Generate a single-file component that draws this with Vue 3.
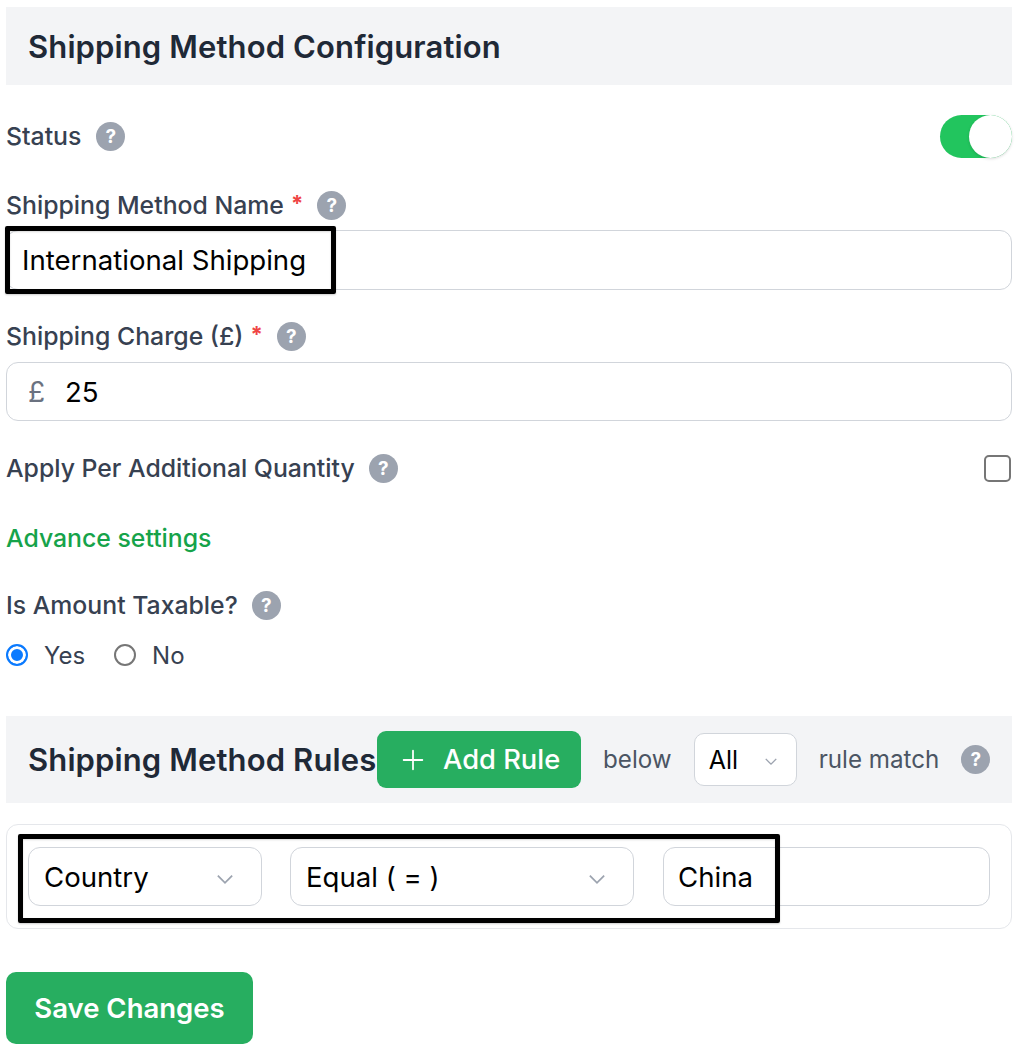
<script setup>
// Static form mock: no reactive state is needed.
</script>

<template>
  <div class="page">
    <div class="annot annot-name"></div>
    <div class="annot annot-rule"></div>

    <div class="section-head"><h2 class="title">Shipping Method Configuration</h2></div>

    <div class="row status-row">
      <span class="label">Status</span><span class="help status-help">?</span>
      <span class="toggle"><span class="knob"></span></span>
    </div>

    <div class="row name-label">
      <span class="label">Shipping Method Name</span><span class="req">*</span><span class="help">?</span>
    </div>
    <div class="field name-field">International Shipping</div>

    <div class="row charge-label">
      <span class="label">Shipping Charge (£)</span><span class="req">*</span><span class="help">?</span>
    </div>
    <div class="field charge-field"><span class="prefix">£</span>25</div>

    <div class="row apply-row">
      <span class="label">Apply Per Additional Quantity</span><span class="help">?</span>
      <span class="checkbox"></span>
    </div>

    <div class="row advance-row"><span class="advance">Advance settings</span></div>

    <div class="row taxable-row">
      <span class="label">Is Amount Taxable?</span><span class="help">?</span>
    </div>

    <div class="row radio-row">
      <span class="radio checked"></span><span class="radio-text yes">Yes</span>
      <span class="radio"></span><span class="radio-text">No</span>
    </div>

    <div class="rules-head">
      <h2 class="title rules-title">Shipping Method Rules</h2>
      <button class="add-btn">
        <svg class="plus" viewBox="0 0 20 20" fill="none" stroke="#fff" stroke-width="1.6" stroke-linecap="round"><path d="M10 1.5v17M1.5 10h17" /></svg>
        Add Rule
      </button>
      <span class="muted below">below</span>
      <div class="mini-select">All
        <svg class="chev small" viewBox="0 0 16 10" fill="none" stroke="#9ca3af" stroke-width="1.6"><path d="M2 2l6 6 6-6" /></svg>
      </div>
      <span class="muted match">rule match</span>
      <span class="help">?</span>
    </div>

    <div class="rule-box">
      <div class="field rule-select">Country
        <svg class="chev" viewBox="0 0 16 10" fill="none" stroke="#9ca3af" stroke-width="1.6"><path d="M1.5 1.500L8 8l6.500-6.500" /></svg>
      </div>
      <div class="field rule-select">Equal ( = )
        <svg class="chev" viewBox="0 0 16 10" fill="none" stroke="#9ca3af" stroke-width="1.6"><path d="M1.5 1.500L8 8l6.500-6.500" /></svg>
      </div>
      <div class="field rule-value">China</div>
    </div>

    <button class="save-btn">Save Changes</button>
  </div>
</template>

<style>
body { background: #fff; }
</style>

<style scoped>
* { box-sizing: border-box; }
.page {
  position: relative;
  width: 1018px;
  height: 1048px;
  padding: 7px 6px 0;
  font-family: Inter, "Liberation Sans", sans-serif;
  overflow: hidden;
  background: #fff;
}
.annot {
  position: absolute;
  border: 5px solid #000;
  border-radius: 2px;
  z-index: 2;
  pointer-events: none;
  box-shadow: 0 1px 2px rgba(0, 0, 0, 0.2), inset 0 1px 2px rgba(0, 0, 0, 0.15);
}
.annot-name { left: 5px; top: 226px; width: 331px; height: 68px; }
.annot-rule { left: 18px; top: 834px; width: 762px; height: 89px; }
.section-head {
  height: 78px;
  background: #f3f4f6;
  display: flex;
  align-items: center;
  padding-left: 22px;
}
.title {
  margin: 0;
  font-size: 31px;
  font-weight: 600;
  color: #1f2937;
  white-space: nowrap;
  letter-spacing: 0.12px;
}
.rules-title { width: 349px; flex: none; }
.row { display: flex; align-items: center; height: 30px; }
.label { font-size: 24.8px; font-weight: 500; color: #374151; white-space: nowrap; }
.req { color: #ef4444; font-size: 22px; font-weight: 700; margin-left: 7px; align-self: flex-start; }
.help {
  width: 29px;
  height: 29px;
  margin-left: 14px;
  border-radius: 50%;
  background: #9ca3af;
  color: #fff;
  font-size: 19px;
  font-weight: 700;
  display: inline-flex;
  align-items: center;
  justify-content: center;
  flex: none;
}
.status-help { margin-left: 15px; }
.status-row { margin-top: 29px; height: 44px; }
.toggle {
  margin-left: auto;
  width: 72px;
  height: 43px;
  border-radius: 22px;
  background: #22c55e;
  position: relative;
  flex: none;
}
.knob {
  position: absolute;
  right: 0;
  top: 0;
  width: 43px;
  height: 43px;
  border-radius: 50%;
  background: #fff;
  box-shadow: 0 1px 3px rgba(0, 0, 0, 0.15);
}
.name-label { margin-top: 32px; }
.field {
  border: 1px solid #d1d5db;
  border-radius: 12px;
  background: #fff;
  display: flex;
  align-items: center;
  font-size: 27.6px;
  color: #000;
  padding-left: 15px;
  white-space: nowrap;
}
.name-field { margin-top: 10px; height: 60px; }
.charge-label { margin-top: 31px; }
.charge-field { margin-top: 11px; height: 59px; padding-left: 21px; }
.prefix { color: #6b7280; width: 37px; font-size: 28px; }
.apply-row { margin-top: 32px; }
.checkbox {
  margin-left: auto;
  margin-right: 1px;
  width: 27px;
  height: 27px;
  border: 2px solid #767676;
  border-radius: 5px;
  flex: none;
}
.advance-row { margin-top: 40px; }
.advance { font-size: 24.8px; font-weight: 500; color: #16a34a; }
.taxable-row { margin-top: 37px; }
.radio-row { margin-top: 20px; }
.radio {
  width: 22px;
  height: 22px;
  border-radius: 50%;
  border: 2px solid #767676;
  flex: none;
  background: #fff;
}
.radio.checked {
  border-color: #0a7aff;
  background: #0a7aff;
  box-shadow: inset 0 0 0 3px #fff;
}
.radio-text { font-size: 24px; font-weight: 400; color: #374151; margin-left: 16px; }
.radio-text.yes { margin-right: 29px; }
.rules-head {
  margin-top: 46px;
  height: 87px;
  background: #f3f4f6;
  display: flex;
  align-items: center;
  padding-left: 22px;
}
.rules-head .help { margin-left: 22px; }
.add-btn {
  flex: none;
  width: 204px;
  height: 57px;
  background: #27ae60;
  border: 0;
  border-radius: 9px;
  color: #fff;
  font-family: inherit;
  font-size: 27.3px;
  font-weight: 500;
  display: flex;
  align-items: center;
  padding: 0 0 0 25px;
  gap: 19px;
}
.plus { width: 22px; height: 22px; flex: none; }
.muted { font-size: 24.2px; color: #4b5563; white-space: nowrap; }
.below { margin-left: 22px; }
.mini-select {
  margin-left: 22px;
  width: 103px;
  height: 53px;
  flex: none;
  background: #fff;
  border: 1px solid #d1d5db;
  border-radius: 10px;
  font-size: 25px;
  color: #000;
  display: flex;
  align-items: center;
  padding-left: 14px;
  position: relative;
}
.match { margin-left: 22px; }
.rule-box {
  margin-top: 21px;
  height: 105px;
  border: 1px solid #e5e7eb;
  border-radius: 12px;
  padding: 22px 21px 0;
  display: flex;
  gap: 28px;
  align-items: flex-start;
}
.rule-select { position: relative; height: 59px; flex: none; }
.rule-select:nth-child(1) { width: 234px; }
.rule-select:nth-child(2) { width: 344px; }
.rule-value { flex: 1; height: 59px; margin-left: 1px; padding-left: 14px; }
.chev {
  position: absolute;
  right: 27px;
  top: 26px;
  width: 18px;
  height: 11px;
}
.chev.small { right: 18px; top: 23px; width: 14px; height: 9px; }
.save-btn {
  display: block;
  margin-top: 43px;
  width: 247px;
  height: 72px;
  background: #27ae60;
  border: 0;
  border-radius: 10px;
  color: #fff;
  font-family: inherit;
  font-size: 27.5px;
  font-weight: 600;
}
</style>
